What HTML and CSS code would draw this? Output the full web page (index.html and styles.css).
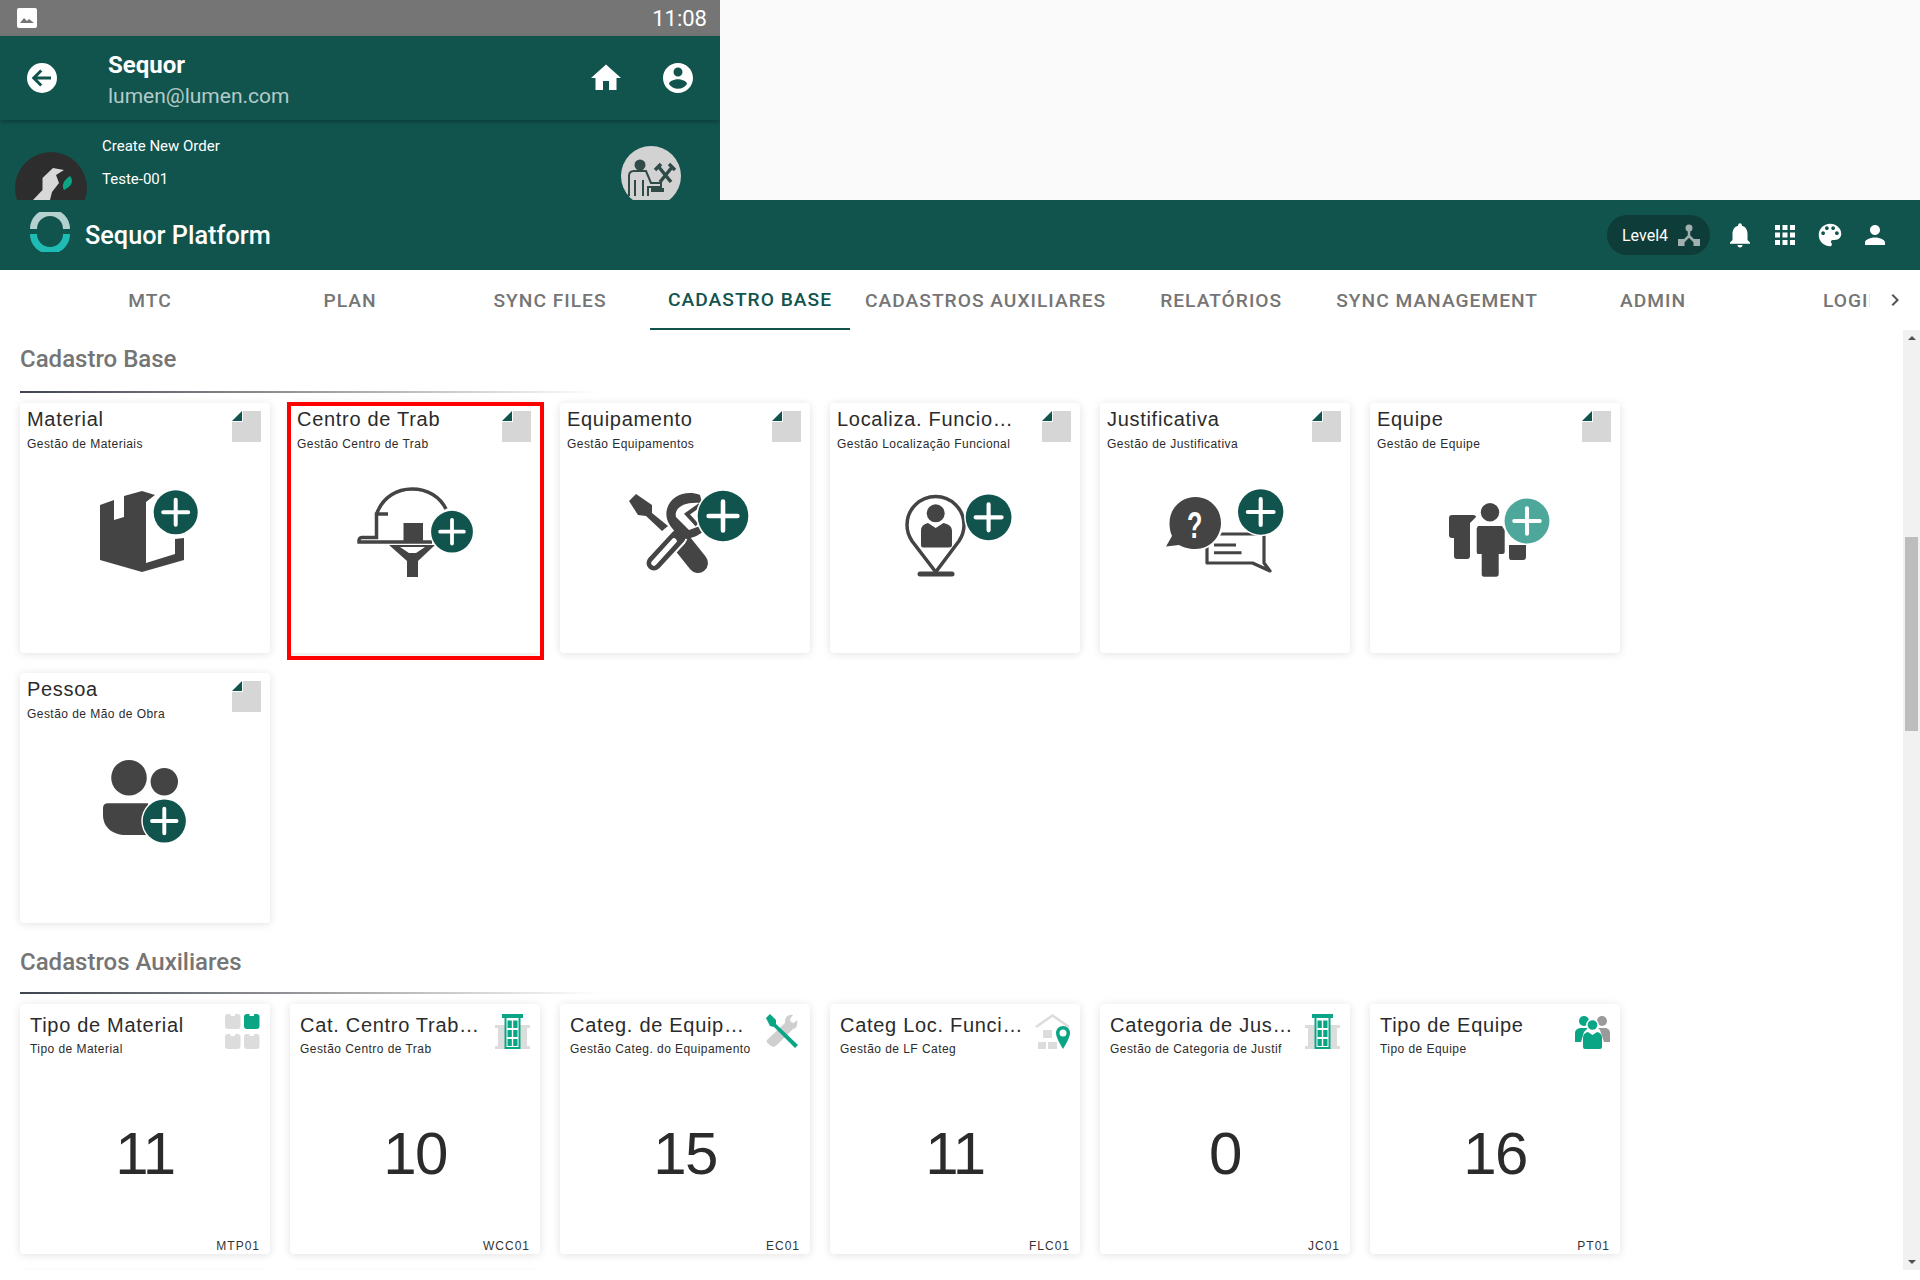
FILE: index.html
```html
<!DOCTYPE html>
<html lang="pt">
<head>
<meta charset="utf-8">
<title>Sequor Platform</title>
<link rel="stylesheet" href="styles.css">
</head>
<body>
<svg class="defs" aria-hidden="true">
  <defs>
    <g id="plus">
      <circle r="23.5" fill="#fff"/>
      <circle r="22" fill="#11544e"/>
      <path d="M-12.5 0H12.5M0 -12.5V12.5" stroke="#fff" stroke-width="4" stroke-linecap="round"/>
    </g>
    <g id="plus-light">
      <circle r="23.5" fill="#fff"/>
      <circle r="22" fill="#4da79a"/>
      <path d="M-12.5 0H12.5M0 -12.5V12.5" stroke="#fff" stroke-width="4" stroke-linecap="round"/>
    </g>
    <symbol id="doc" viewBox="0 0 29 31">
      <path d="M11 0H29V31H0V11H11Z" fill="#d6d6d6"/>
      <path d="M10 0V10H0Z" fill="#11544e"/>
    </symbol>
    <path id="block" d="M0 3a3 3 0 0 1 3-3h2.500v2h4.500v-2h2.500a3 3 0 0 1 3 3v9a3 3 0 0 1-3 3h-9.500a3 3 0 0 1-3-3z"/>
    <symbol id="building" viewBox="0 0 35 35">
      <path d="M0 11H35V14H32V32H35V35H0V32H3V14H0Z" fill="#dcdcdc"/>
      <path d="M7 0H28V4H25.500V35H9.500V4H7Z" fill="#0aa585"/>
      <path d="M11.500 4H23.500V33H11.500Z" fill="#fff"/>
      <path d="M12.500 6.500H16.800V14H12.500ZM18.200 6.500H22.500V14H18.200ZM12.500 16H16.800V23H12.500ZM18.200 16H22.500V23H18.200ZM12.500 25H16.800V32H12.500ZM18.200 25H22.500V32H18.200Z" fill="#0aa585"/>
    </symbol>
  </defs>
</svg>

<section class="phone">
  <div class="status">
    <svg class="status-img" viewBox="0 0 20 20"><rect width="20" height="20" rx="2" fill="#fff"/><path d="M3 15l4-5 3 3 2-2 5 4z" fill="#757575"/></svg>
    <span class="status-time">11:08</span>
  </div>
  <header class="phone-head">
    <svg class="ico36" viewBox="0 0 24 24"><circle cx="12" cy="12" r="10" fill="#fff"/><path d="M18 12H7M11.500 7L6.500 12L11.500 17" fill="none" stroke="#11544e" stroke-width="2"/></svg>
    <div class="phone-id">
      <div class="phone-name">Sequor</div>
      <div class="phone-mail">lumen@lumen.com</div>
    </div>
    <svg class="ico36 phone-home" viewBox="0 0 24 24"><path fill="#fff" d="M10 20v-6h4v6h5v-8h3L12 3 2 12h3v8z"/></svg>
    <svg class="ico36" viewBox="0 0 24 24"><path fill="#fff" d="M12 2C6.480 2 2 6.480 2 12s4.480 10 10 10 10-4.480 10-10S17.520 2 12 2zm0 3c1.660 0 3 1.340 3 3s-1.340 3-3 3-3-1.340-3-3 1.340-3 3-3zm0 14.200c-2.500 0-4.710-1.280-6-3.220.030-1.990 4-3.080 6-3.080 1.990 0 5.970 1.090 6 3.080-1.290 1.940-3.500 3.220-6 3.220z"/></svg>
  </header>
  <div class="phone-sub">
    <svg class="sub-avatar" viewBox="0 0 72 72">
      <circle cx="36" cy="36" r="36" fill="#2d2d2d"/>
      <path d="M38 16L49 18L41 23L44 31L37 40L35 48H18L27.500 38L27.500 26Z" fill="#d8d8d8"/>
      <path d="M55 24C59 29 57 34 49 38C46 33 49 28 55 24Z" fill="#0aa585"/>
    </svg>
    <div class="sub-text">
      <div class="sub-line">Create New Order</div>
      <div class="sub-line">Teste-001</div>
    </div>
    <svg class="sub-tools" viewBox="0 0 60 60">
      <circle cx="30" cy="30" r="30" fill="#d2d2d2"/>
      <circle cx="19" cy="19" r="5.500" fill="#2f4a47"/>
      <path d="M8 50V30Q8 25 13 25H25L30 37H40V41H27V50M14 34V50M22 34V50" fill="none" stroke="#2f4a47" stroke-width="2"/>
      <path d="M30 42H43V46H30Z" fill="#2f4a47"/>
      <path d="M37 20L50 36M52 20L39 36M34 24L40 18M48 18L54 24" stroke="#2f4a47" stroke-width="3.500" fill="none"/>
    </svg>
  </div>
</section>

<div class="app">
  <header class="toolbar">
    <svg class="logo" viewBox="0 0 40 40">
      <path d="M3.500 17A16.500 16.500 0 0 1 36.500 17" fill="none" stroke="#b5d1cf" stroke-width="7"/>
      <path d="M3.500 22A16.500 16.500 0 0 0 36.500 22" fill="none" stroke="#1fbcb5" stroke-width="7"/>
    </svg>
    <div class="brand">Sequor Platform</div>
    <div class="level">
      <span>Level4</span>
      <svg class="level-ico" viewBox="0 0 22 22"><path d="M11 5V12L4 19M11 12L18 19" stroke="#9fb0ae" stroke-width="2.500" fill="none"/><circle cx="11" cy="4" r="3.500" fill="#9fb0ae"/><rect x="0" y="15" width="6.500" height="7" fill="#9fb0ae"/><rect x="15.500" y="15" width="6.500" height="7" fill="#9fb0ae"/></svg>
    </div>
    <svg class="ico30" viewBox="0 0 24 24"><path fill="#fff" d="M12 22c1.100 0 2-.9 2-2h-4c0 1.100.89 2 2 2zm6-6v-5c0-3.070-1.640-5.640-4.500-6.320V4c0-.83-.67-1.500-1.500-1.500s-1.500.67-1.500 1.500v.68C7.630 5.360 6 7.920 6 11v5l-2 2v1h16v-1l-2-2z"/></svg>
    <svg class="ico30" viewBox="0 0 24 24"><path fill="#fff" d="M4 8h4V4H4v4zm6 12h4v-4h-4v4zm-6 0h4v-4H4v4zm0-6h4v-4H4v4zm6 0h4v-4h-4v4zm6-10v4h4V4h-4zm-6 4h4V4h-4v4zm6 6h4v-4h-4v4zm0 6h4v-4h-4v4z"/></svg>
    <svg class="ico30" viewBox="0 0 24 24"><path fill="#fff" d="M12 3c-4.970 0-9 4.030-9 9s4.030 9 9 9c.83 0 1.500-.67 1.500-1.500 0-.39-.15-.74-.39-1.010-.23-.26-.38-.61-.38-.99 0-.83.67-1.500 1.500-1.500H16c2.760 0 5-2.240 5-5 0-4.420-4.030-8-9-8zm-5.500 9c-.83 0-1.500-.67-1.500-1.500S5.670 9 6.500 9 8 9.670 8 10.500 7.330 12 6.500 12zm3-4C8.670 8 8 7.330 8 6.500S8.670 5 9.500 5s1.500.67 1.500 1.500S10.330 8 9.500 8zm5 0c-.83 0-1.500-.67-1.500-1.500S13.670 5 14.500 5s1.500.67 1.500 1.500S15.330 8 14.500 8zm3 4c-.83 0-1.500-.67-1.500-1.500S16.670 9 17.500 9s1.500.67 1.500 1.500-.67 1.500-1.500 1.500z"/></svg>
    <svg class="ico30" viewBox="0 0 24 24"><path fill="#fff" d="M12 12c2.210 0 4-1.790 4-4s-1.790-4-4-4-4 1.790-4 4 1.790 4 4 4zm0 2c-2.670 0-8 1.340-8 4v2h16v-2c0-2.660-5.330-4-8-4z"/></svg>
  </header>

  <nav class="tabs">
    <div class="tab-list">
      <div class="tab">MTC</div>
      <div class="tab">PLAN</div>
      <div class="tab">SYNC FILES</div>
      <div class="tab tab-active">CADASTRO BASE</div>
      <div class="tab">CADASTROS AUXILIARES</div>
      <div class="tab">RELATÓRIOS</div>
      <div class="tab">SYNC MANAGEMENT</div>
      <div class="tab">ADMIN</div>
      <div class="tab">LOGIN</div>
    </div>
    <div class="tab-next">
      <svg class="ico24" viewBox="0 0 24 24"><path fill="#555" d="M10 6L8.590 7.410 13.170 12l-4.580 4.590L10 18l6-6z"/></svg>
    </div>
  </nav>

  <div class="main">
    <div class="content">
      <h2 class="sec-title">Cadastro Base</h2>
      <div class="sec-line"></div>
      <div class="cards">

        <article class="card">
          <div class="head">
            <div class="head-text"><div class="title">Material</div><div class="sub">Gestão de Materiais</div></div>
            <svg class="doc"><use href="#doc"/></svg>
          </div>
          <svg class="art" viewBox="0 0 250 130">
            <path fill="#444" d="M80 32L94 27V47L104 44V23L122 18L135 22L126 29V90L155 81V66L164 65V87L122 99L80 87Z"/>
            <use href="#plus" transform="translate(155.700 39.300)"/>
          </svg>
        </article>

        <article class="card">
          <div class="head">
            <div class="head-text"><div class="title">Centro de Trab</div><div class="sub">Gestão Centro de Trab</div></div>
            <svg class="doc"><use href="#doc"/></svg>
          </div>
          <svg class="art" viewBox="0 0 250 130">
            <path d="M87 40C93 24 107 16 122 16C138 16 150 24 156 36" fill="none" stroke="#444" stroke-width="3.500"/>
            <path d="M98 41H86.500V64.500H72Q68.500 64.500 69 69H142" fill="none" stroke="#444" stroke-width="3.500"/>
            <rect x="113.500" y="50" width="19.500" height="20" fill="#444"/>
            <path fill="#444" fill-rule="evenodd" d="M99 72H145L128 88V104H117V88ZM110 74L119 80H126L135 74Z"/>
            <use href="#plus" transform="translate(162 58.700) scale(.95)"/>
          </svg>
        </article>

        <article class="card">
          <div class="head">
            <div class="head-text"><div class="title">Equipamento</div><div class="sub">Gestão Equipamentos</div></div>
            <svg class="doc"><use href="#doc"/></svg>
          </div>
          <svg class="art" viewBox="0 0 250 130">
            <path fill="#444" d="M69 28L76 21L92 32L92 40L108 53L102 58L86 43L78 42Z"/>
            <path d="M122 70L138 90" stroke="#444" stroke-width="20" stroke-linecap="round"/>
            <path d="M94 90L118 64" stroke="#fff" stroke-width="19" stroke-linecap="round"/>
            <path d="M94 90L118 64" stroke="#444" stroke-width="15" stroke-linecap="round"/>
            <path d="M94 90L114 68" stroke="#fff" stroke-width="5.500" stroke-linecap="round"/>
            <path fill="#444" d="M140 22C127 17 111 22 107 36C105 44 108 50 112 55L118 63L126 66C133 65 140 62 146 56L140 53L129 57L116 44C114 36 122 28 142 30Z"/>
            <path d="M140 32L127 41L137 52" fill="none" stroke="#444" stroke-width="4"/>
            <use href="#plus" transform="translate(163 43) scale(1.150)"/>
          </svg>
        </article>

        <article class="card">
          <div class="head">
            <div class="head-text"><div class="title">Localiza. Funcional</div><div class="sub">Gestão Localização Funcional</div></div>
            <svg class="doc"><use href="#doc"/></svg>
          </div>
          <svg class="art" viewBox="0 0 250 130">
            <path d="M105.700 99L82 68C78 62 77 58 77 52C77 36 90 23.500 105.700 23.500C121 23.500 134 36 134 52C134 58 133 62 129 68Z" fill="none" stroke="#444" stroke-width="3.500"/>
            <path d="M90 101H122" stroke="#444" stroke-width="5" stroke-linecap="round"/>
            <circle cx="105.700" cy="40.300" r="9" fill="#444"/>
            <path fill="#444" d="M91 58C91 53 94 51 98 50L105.700 55L113.500 50C118 51 122 53 122 58V72Q122 74.500 119 74.500H93Q91 74.500 91 72Z"/>
            <use href="#plus" transform="translate(158.600 44.300) scale(1.040)"/>
          </svg>
        </article>

        <article class="card">
          <div class="head">
            <div class="head-text"><div class="title">Justificativa</div><div class="sub">Gestão de Justificativa</div></div>
            <svg class="doc"><use href="#doc"/></svg>
          </div>
          <svg class="art" viewBox="0 0 250 130">
            <path d="M107 61H164V90L170 98L152.500 90H107Z" fill="none" stroke="#444" stroke-width="3.200" stroke-linejoin="round"/>
            <path d="M114 72H136M114 79.700H141.500" stroke="#444" stroke-width="3"/>
            <circle cx="95.400" cy="49.700" r="28" fill="#fff"/>
            <path fill="#444" d="M95.400 24C110 24 121 35.500 121 50C121 64 110 76 95.400 76C88 76 83 74 79 72L66 73.500L72 63C70 59 69.500 54 69.500 50C69.500 35.500 81 24 95.400 24Z"/>
            <text class="q" transform="translate(94.600 65) scale(.68 1)">?</text>
            <use href="#plus" transform="translate(160.700 39) scale(1.030)"/>
          </svg>
        </article>

        <article class="card">
          <div class="head">
            <div class="head-text"><div class="title">Equipe</div><div class="sub">Gestão de Equipe</div></div>
            <svg class="doc"><use href="#doc"/></svg>
          </div>
          <svg class="art" viewBox="0 0 250 130">
            <path fill="#444" d="M82 42H103Q106 42 106 44L100 50V83Q100 86 97 86H87Q84 86 84 83V65H82Q79 65 79 62V45Q79 42 82 42Z"/>
            <path fill="#444" d="M139 72H156V84Q156 87 153 87H141Q139 87 139 84Z"/>
            <circle cx="120" cy="39.300" r="9.200" fill="#444"/>
            <path d="M107.500 52H132.500L135.700 57V79Q135.700 82 132.500 82H129.700V101Q129.700 104.700 126 104.700H114Q110.700 104.700 110.700 101V82H108Q105.700 82 105.700 79V55Z" fill="#444" stroke="#fff" stroke-width="2"/>
            <use href="#plus-light" transform="translate(157 48) scale(1.020)"/>
          </svg>
        </article>

        <article class="card">
          <div class="head">
            <div class="head-text"><div class="title">Pessoa</div><div class="sub">Gestão de Mão de Obra</div></div>
            <svg class="doc"><use href="#doc"/></svg>
          </div>
          <svg class="art" viewBox="0 0 250 130">
            <circle cx="109" cy="34.700" r="17.800" fill="#444"/>
            <circle cx="144.300" cy="38.700" r="13.700" fill="#444"/>
            <path fill="#444" d="M88 60.300H128V92H106C92 92 83 84 83 72V65Q83 60.300 88 60.300Z"/>
            <use href="#plus" transform="translate(144.300 78) scale(.98)"/>
          </svg>
        </article>
      </div>

      <h2 class="sec-title sec-title-next">Cadastros Auxiliares</h2>
      <div class="sec-line"></div>
      <div class="cards">

        <article class="card card-stat">
          <div class="head head-stat">
            <div class="head-text"><div class="title">Tipo de Material</div><div class="sub">Tipo de Material</div></div>
            <svg class="stat-ico" viewBox="0 0 35 35">
              <use href="#block" fill="#dcdcdc"/>
              <use href="#block" fill="#0aa585" x="19"/>
              <use href="#block" fill="#dcdcdc" y="20"/>
              <use href="#block" fill="#dcdcdc" x="19" y="20"/>
            </svg>
          </div>
          <div class="num">11</div>
          <div class="code">MTP01</div>
        </article>

        <article class="card card-stat">
          <div class="head head-stat">
            <div class="head-text"><div class="title">Cat. Centro Trabalho</div><div class="sub">Gestão Centro de Trab</div></div>
            <svg class="stat-ico"><use href="#building"/></svg>
          </div>
          <div class="num">10</div>
          <div class="code">WCC01</div>
        </article>

        <article class="card card-stat">
          <div class="head head-stat">
            <div class="head-text"><div class="title">Categ. de Equipamento</div><div class="sub">Gestão Categ. do Equipamento</div></div>
            <svg class="stat-ico" viewBox="0 0 35 35">
              <path d="M30 16L14 32Q11 35 8 33Q6 32 6 31Q3 30 4 27L22 10C21 5 25 1 30 2L27 6L28 9L31 10L34 7C35 12 33 16 30 16Z" fill="#cfcfcf" transform="translate(-2 -1)"/>
              <path d="M1 4L5 0L11 6L11 10L33 31L30 34L9 13L5 12Z" fill="#0aa585"/>
            </svg>
          </div>
          <div class="num">15</div>
          <div class="code">EC01</div>
        </article>

        <article class="card card-stat">
          <div class="head head-stat">
            <div class="head-text"><div class="title">Categ Loc. Funcional</div><div class="sub">Gestão de LF Categ</div></div>
            <svg class="stat-ico" viewBox="0 0 35 35">
              <path d="M1 13L17.500 1.500L34 13" fill="none" stroke="#dcdcdc" stroke-width="2.600"/>
              <path d="M8 16H17V24H8ZM3 28H11V35H3ZM13 28H22V35H13Z" fill="#dcdcdc"/>
              <path d="M28 12C32 12 35 15 35 19C35 23 31 30 28 35C25 30 21 23 21 19C21 15 24 12 28 12Z" fill="#0aa585"/>
              <circle cx="28" cy="19" r="3.500" fill="#fff"/>
            </svg>
          </div>
          <div class="num">11</div>
          <div class="code">FLC01</div>
        </article>

        <article class="card card-stat">
          <div class="head head-stat">
            <div class="head-text"><div class="title">Categoria de Justificativa</div><div class="sub">Gestão de Categoria de Justif</div></div>
            <svg class="stat-ico"><use href="#building"/></svg>
          </div>
          <div class="num">0</div>
          <div class="code">JC01</div>
        </article>

        <article class="card card-stat">
          <div class="head head-stat">
            <div class="head-text"><div class="title">Tipo de Equipe</div><div class="sub">Tipo de Equipe</div></div>
            <svg class="stat-ico" viewBox="0 0 35 35">
              <circle cx="27" cy="7" r="5" fill="#9a9a9a"/>
              <path d="M23 14H31Q35 15 35 19V28H29L25 16Z" fill="#9a9a9a"/>
              <circle cx="9" cy="7" r="5" fill="#0aa585"/>
              <path d="M5 14H13L9 18L6 28H0V19Q0 15 5 14Z" fill="#0aa585"/>
              <circle cx="17.500" cy="11" r="5.600" fill="#0aa585" stroke="#fff" stroke-width="1.500"/>
              <path d="M13 18L17.500 21L22 18Q27 19 27 24V33Q27 35 25 35H10Q8 35 8 33V24Q8 19 13 18Z" fill="#0aa585"/>
            </svg>
          </div>
          <div class="num">16</div>
          <div class="code">PT01</div>
        </article>

        <div class="card"></div>
        <div class="card"></div>
      </div>
    </div>
    <div class="scrollbar">
      <span class="sb-up"></span>
      <span class="sb-thumb"></span>
      <span class="sb-down"></span>
    </div>
  </div>
</div>
<div class="annot"></div>
</body>
</html>
```
FILE: styles.css
```css
* { box-sizing: border-box; }
html, body { margin: 0; height: 1280px; overflow: hidden; }
body {
  position: relative;
  display: flex;
  flex-direction: column;
  background: #fafafa;
  font-family: Roboto, "Liberation Sans", sans-serif;
  color: #212121;
}
.defs { position: absolute; width: 0; height: 0; }
svg { display: block; flex: none; }

/* phone frame */
.phone { width: 720px; height: 200px; overflow: hidden; background: #11544e; flex: none; }
.status {
  height: 36px;
  background: #757575;
  display: flex;
  align-items: center;
  justify-content: space-between;
  padding: 0 13px 0 17px;
}
.status-img { width: 20px; height: 20px; }
.status-time { color: #fff; font-size: 22px; }
.phone-head {
  position: relative;
  height: 84px;
  display: flex;
  align-items: center;
  padding: 0 24px;
  background: #11544e;
  box-shadow: 0 2px 4px rgba(0, 0, 0, .25);
}
.ico36 { width: 36px; height: 36px; }
.phone-id { margin-left: 48px; flex: 1; padding-top: 5px; }
.phone-name { color: #fff; font-size: 24px; font-weight: 700; line-height: 31px; }
.phone-mail { color: #b3cbc8; font-size: 21px; line-height: 31px; }
.phone-home { margin-right: 36px; }
.phone-sub { display: flex; height: 80px; padding-left: 15px; }
.sub-avatar { width: 72px; height: 72px; margin-top: 32px; }
.sub-text { margin-left: 15px; flex: 1; padding-top: 15px; }
.sub-line { color: #fff; font-size: 15px; line-height: 22px; margin-bottom: 11px; }
.sub-tools { width: 60px; height: 60px; margin: 26px 39px 0 0; }

/* toolbar */
.app { flex: 1; background: #fff; display: flex; flex-direction: column; min-height: 0; }
.toolbar {
  height: 70px;
  flex: none;
  background: #11544e;
  display: flex;
  align-items: center;
  gap: 15px;
  padding: 0 30px;
}
.logo { width: 40px; height: 40px; margin-top: -6px; }
.brand { color: #fff; font-size: 25.3px; font-weight: 500; flex: 1; }
.level {
  height: 40px;
  width: 103px;
  border-radius: 20px;
  background: #0e3c38;
  color: #fff;
  font-size: 16px;
  display: flex;
  align-items: center;
  gap: 10px;
  padding-left: 15px;
}
.level-ico { width: 22px; height: 22px; }
.ico30 { width: 30px; height: 30px; }

/* tabs */
.tabs { height: 60px; flex: none; display: flex; padding-left: 50px; }
.tab-list { flex: 1; display: flex; overflow: hidden; min-width: 0; }
.tab {
  flex: none;
  min-width: 200px;
  padding: 0 15px;
  height: 60px;
  display: flex;
  align-items: center;
  justify-content: center;
  font-size: 19.2px;
  font-weight: 500;
  letter-spacing: 1px;
  color: #757575;
}
.tab-active { color: #11544e; border-bottom: 2px solid #11544e; }
.tab-next { width: 50px; flex: none; display: flex; align-items: center; justify-content: center; }
.ico24 { width: 24px; height: 24px; }

/* content */
.main { height: 940px; flex: none; display: flex; background: #fff; }
.content { flex: 1; min-width: 0; overflow: hidden; padding: 14px 20px 0; }
.sec-title {
  margin: 0 0 17px;
  font-size: 24px;
  line-height: 30px;
  font-weight: 500;
  color: #757575;
}
.sec-title-next { margin-top: 24px; margin-bottom: 15px; }
.sec-line {
  width: 580px;
  height: 2px;
  background: linear-gradient(to right, #3f4550, #8f9194 45%, #fff);
}
.cards { display: flex; flex-wrap: wrap; gap: 20px; width: 1600px; margin-top: 10px; }
.card {
  position: relative;
  width: 250px;
  height: 250px;
  background: #fff;
  border-radius: 4px;
  box-shadow: 0 1px 8px rgba(0, 0, 0, .12);
  font-family: "Liberation Sans", Arial, sans-serif;
  display: flex;
  flex-direction: column;
}
.head { display: flex; height: 70px; padding: 6px 9px 0 7px; flex: none; }
.head-text { flex: 1; min-width: 0; }
.title {
  width: 180px;
  font-size: 20px;
  line-height: 20px;
  letter-spacing: .7px;
  white-space: nowrap;
  overflow: hidden;
  text-overflow: ellipsis;
  color: #2b2b2b;
  height: 22px;
}
.sub {
  font-size: 12px;
  line-height: 16px;
  letter-spacing: .45px;
  margin-top: 4.5px;
  white-space: nowrap;
  color: #2b2b2b;
}
.doc { width: 29px; height: 31px; margin-top: 2px; }
.art { width: 250px; height: 130px; }
.q { font: 700 37px "Liberation Sans", Arial, sans-serif; fill: #fff; text-anchor: middle; }

.head-stat { padding: 10px 10px 0 10px; }
.head-stat .title { width: 185px; margin-top: 1px; }
.head-stat .sub { margin-top: 3.5px; }
.stat-ico { width: 35px; height: 35px; margin-top: 0; }
.num {
  flex: 1;
  display: flex;
  align-items: center;
  justify-content: center;
  font-size: 60px;
  letter-spacing: -1.5px;
  color: #2b2b2b;
  padding-bottom: 6px;
}
.code {
  font-size: 12px;
  line-height: 16px;
  letter-spacing: 1px;
  text-align: right;
  padding: 0 10px 0 0;
  color: #333;
}

/* scrollbar */
.scrollbar { width: 17px; flex: none; background: #f1f1f1; display: flex; flex-direction: column; align-items: center; position: relative; }
.sb-up, .sb-down { width: 0; height: 0; border-left: 4px solid transparent; border-right: 4px solid transparent; }
.sb-up { border-bottom: 4px solid #505050; margin-top: 6px; }
.sb-thumb { width: 13px; height: 194px; background: #bdbdbd; margin-top: 197px; }
.sb-down { border-top: 4px solid #505050; margin-top: auto; margin-bottom: 6px; }

/* red highlight annotation */
.annot {
  position: absolute;
  left: 287px;
  top: 402px;
  width: 257px;
  height: 258px;
  border: 4px solid #f00;
  pointer-events: none;
}
```
